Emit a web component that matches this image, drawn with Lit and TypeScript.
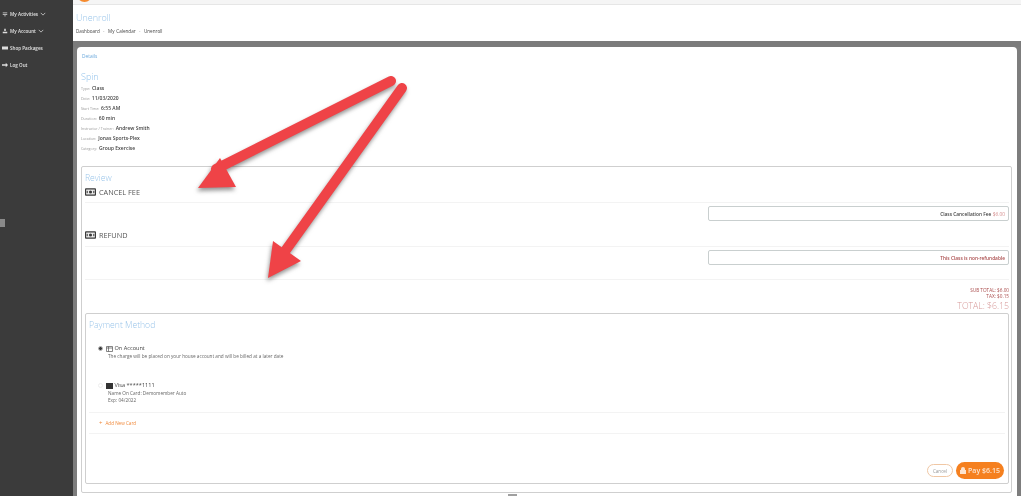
import { LitElement, html, css, svg } from "lit";
import { customElement } from "lit/decorators.js";

const money = svg`<svg class="money" viewBox="0 0 12 8"><rect width="12" height="8" rx="1" fill="#3a3a3a"/><rect x="1.3" y="1.3" width="9.4" height="5.4" fill="#eee"/><circle cx="6" cy="4" r="1.7" fill="#3a3a3a"/><path d="M1.3 4 3 2.4V5.6ZM10.7 4 9 2.4V5.6Z" fill="#3a3a3a"/></svg>`;

@customElement("app-root")
export class AppRoot extends LitElement {
  static styles = css`
    :host { display: block; width: 1024px; height: 496px; overflow: hidden; background: #fff; position: relative; font-family: "Open Sans", "Liberation Sans", sans-serif; color: #333; }
    .page { display: grid; grid-template-columns: 73px 1fr 3px; height: 496px; filter: blur(0.5px); }
    .side { background: #3b3b3b; padding-top: 8px; display: flex; flex-direction: column; gap: 5px; position: relative; }
    .nav { height: 12px; display: flex; align-items: center; gap: 2px; padding-left: 2px; font-size: 4.6px; font-weight: 600; color: #e4e4e4; }
    .nav svg { width: 6px; height: 6px; flex: none; }
    .grip { position: absolute; left: 0; top: 219px; width: 5px; height: 8px; background: #8a8a8a; }
    .main { display: flex; flex-direction: column; min-width: 0; height: 496px; background: #7d7d7d; }
    .top { height: 5px; background: #f5f5f5; border-bottom: 1px solid #e6e6e6; box-sizing: border-box; overflow: hidden; position: relative; }
    .logo { position: absolute; left: 4px; top: -13px; width: 15px; height: 15px; border-radius: 50%; background: #f58a2e; }
    .head { height: 36px; background: #fff; box-sizing: border-box; padding: 6px 0 0 3px; }
    .head h1 { margin: 0; font-size: 9px; line-height: 14px; font-weight: 300; color: #9cc6ea; }
    .crumb { margin-top: 3px; font-size: 4.6px; line-height: 7px; color: #444; word-spacing: 0.6px; }
    .band { height: 6px; background: #7b7b7b; flex: none; }
    .card { flex: 1; margin: 0 4px 0 4px; background: #fff; border-radius: 4px 4px 0 0; padding: 6px 5px 0 4px; box-sizing: border-box; position: relative; min-height: 0; }
    .tab { font-size: 4.8px; line-height: 7px; color: #6aa8dc; padding-left: 1px; }
    .spin { margin: 10px 0 0 0; font-size: 9px; line-height: 13px; font-weight: 300; color: #8fc0ea; }
    .facts { display: flex; flex-direction: column; }
    .fact { height: 10px; display: flex; align-items: center; gap: 2px; font-size: 3.6px; color: #999; }
    .fact b { font-size: 5px; font-weight: 600; color: #444; }
    .review { margin-top: 13px; height: 327px; box-sizing: border-box; border: 1px solid #cfcfcf; border-radius: 2px; padding: 5px 2px 0 3px; }
    .review h2 { margin: 0; font-size: 8.6px; line-height: 13px; font-weight: 300; color: #9cc6ea; }
    .pay h2 { margin: 0; font-size: 8.6px; line-height: 12px; font-weight: 300; color: #9cc6ea; }
    .rowhead { display: flex; align-items: center; gap: 3px; height: 14px; font-size: 7.3px; color: #555; }
    .money { width: 11px; height: 8px; flex: none; }
    hr { border: 0; border-top: 1px solid #f3f3f3; margin: 0; }
    .gap1 { margin-top: 3px; }
    .gap2 { margin-top: 4px; }
    .boxrow { display: flex; justify-content: flex-end; margin-top: 3px; height: 22px; }
    .note { width: 301px; height: 15px; box-sizing: border-box; border: 1px solid #c9cfcf; border-radius: 2px; display: flex; align-items: center; justify-content: flex-end; padding-right: 3px; font-size: 4.8px; font-weight: 600; color: #444; gap: 1.5px; }
    .note span { color: #d58f8f; font-weight: 400; }
    .note.red { color: #a94a4a; }
    .totals { margin-top: 7px; height: 8px; }
    .sums { text-align: right; color: #a94a4a; font-size: 4.7px; line-height: 6px; margin-top: -1px; }
    .total { text-align: right; font-size: 8.7px; line-height: 12px; font-weight: 300; color: #d79a9a; margin-top: 1px; }
    .pay { margin-top: 1px; height: 171px; box-sizing: border-box; border: 1px solid #cfcfcf; border-radius: 2px; padding: 5px 3px 0 3px; display: flex; flex-direction: column; }
    .opt { display: grid; grid-template-columns: 6px 1fr; column-gap: 2px; padding-left: 9px; font-size: 4.7px; line-height: 7px; color: #666; }
    .opt.first { margin-top: 13px; }
    .opt.second { margin-top: 21px; }
    .radio { width: 5px; height: 5px; border-radius: 50%; margin-top: 2px; box-sizing: border-box; border: 1px solid #eee; background: #fff; }
    .radio.on { background: #3a3a3a; border-color: #bbb; }
    .title { display: flex; align-items: center; gap: 1.5px; font-size: 5.6px; line-height: 9px; color: #444; }
    .title svg { width: 7px; height: 6px; flex: none; }
    .sub { padding-left: 2px; }
    .add { margin: 0; padding-left: 10px; height: 20px; display: flex; align-items: center; gap: 3px; font-size: 4.6px; color: #f08a3c; }
    .add i { font-style: normal; font-size: 6px; line-height: 6px; }
    .hr2 { margin-top: 8px; }
    .btns { margin-top: auto; margin-bottom: 4px; padding-right: 1px; display: flex; justify-content: flex-end; gap: 3px; align-items: center; }
    .cancel { width: 26px; height: 13px; box-sizing: border-box; border: 1px solid #f0c7a4; border-radius: 7px; font-size: 4.6px; color: #999; display: flex; align-items: center; justify-content: center; }
    .paybtn { width: 48px; height: 17px; border-radius: 9px; background: #f5801f; color: #fde4cf; font-size: 7px; font-weight: 600; display: flex; align-items: center; justify-content: center; gap: 2px; }
    .paybtn svg { width: 6px; height: 7px; }
    .handle { position: absolute; left: 508px; top: 494px; width: 9px; height: 2px; background: #a0a0a0; }
    .arrows { position: absolute; inset: 0; width: 1024px; height: 496px; pointer-events: none; filter: blur(0.3px) drop-shadow(-1px 3px 2px rgba(60,60,60,.55)); }
  `;

  render() {
    const nav = (label: string, d: string, chev = false) => html`<div class="nav">
      <svg viewBox="0 0 8 8"><path d="${d}" fill="#ddd"/></svg>${label}
      ${chev ? html`<svg viewBox="0 0 8 8"><path d="M1 2.5 4 5.5 7 2.5" fill="none" stroke="#ddd" stroke-width="1"/></svg>` : ""}
    </div>`;
    const facts = [["Type:", "Class"], ["Date:", "11/03/2020"], ["Start Time:", "6:55 AM"], ["Duration:", "60 min"], ["Instructor / Trainer:", "Andrew Smith"], ["Location:", "Jonas Sports-Plex"], ["Category:", "Group Exercise"]];
    return html`
      <div class="page">
        <aside class="side">
          ${nav("My Activities", "M1 2h6v1H1zM1 4h6v1H1zM3 6h2v1H3z", true)}
          ${nav("My Account", "M3 1h2v3H3zM1 5h6v2H1z", true)}
          ${nav("Shop Packages", "M0 2h8v4H0z")}
          ${nav("Log Out", "M0 3h5V1l3 3-3 3V5H0z")}
          <div class="grip"></div>
        </aside>
        <main class="main">
          <div class="top"><div class="logo"></div></div>
          <div class="head">
            <h1>Unenroll</h1>
            <div class="crumb">Dashboard &nbsp;·&nbsp; My Calendar &nbsp;·&nbsp; Unenroll</div>
          </div>
          <div class="band"></div>
          <section class="card">
            <div class="tab">Details</div>
            <div class="spin">Spin</div>
            <div class="facts">${facts.map(([k, v]) => html`<div class="fact">${k} <b>${v}</b></div>`)}</div>
            <div class="review">
              <h2>Review</h2>
              <div class="rowhead">${money}CANCEL FEE</div>
              <hr class="gap1" />
              <div class="boxrow"><div class="note">Class Cancellation Fee <span>$6.00</span></div></div>
              <div class="rowhead">${money}REFUND</div>
              <hr class="gap2" />
              <div class="boxrow"><div class="note red">This Class is non-refundable</div></div>
              <hr class="totals" />
              <div class="sums">SUB TOTAL: $6.00<br />TAX: $0.15</div>
              <div class="total">TOTAL: $6.15</div>
              <div class="pay">
                <h2>Payment Method</h2>
                <div class="opt first">
                  <div class="radio on"></div>
                  <div>
                    <div class="title"><svg viewBox="0 0 7 6"><path d="M.5.5h6v5h-6zM.5 2h6M2.5.5v5" fill="none" stroke="#555" stroke-width=".7"/></svg>On Account</div>
                    <div class="sub">The charge will be placed on your house account and will be billed at a later date</div>
                  </div>
                </div>
                <div class="opt second">
                  <div class="radio"></div>
                  <div>
                    <div class="title"><svg viewBox="0 0 7 6"><rect width="7" height="6" fill="#333"/></svg>Visa *****1111</div>
                    <div class="sub">Name On Card: Demomember Auto<br />Exp: 04/2022</div>
                  </div>
                </div>
                <hr class="hr2" />
                <div class="add"><i>+</i>Add New Card</div>
                <hr />
                <div class="btns">
                  <div class="cancel">Cancel</div>
                  <div class="paybtn"><svg viewBox="0 0 6 7"><path d="M1 3V2a2 2 0 0 1 4 0v1h1v4H0V3z" fill="#fde4cf"/></svg>Pay $6.15</div>
                </div>
              </div>
            </div>
          </section>
        </main>
        <div></div>
      </div>
      <div class="handle"></div>
      <svg class="arrows" viewBox="0 0 1024 496">
        <g fill="#ef4347" stroke="none">
          <path d="M391 81 216 169" stroke="#ef4347" stroke-width="10" stroke-linecap="round" fill="none"/>
          <path d="M198 188 220 158 236 187Z"/>
          <path d="M402 88 283 254" stroke="#ef4347" stroke-width="10" stroke-linecap="round" fill="none"/>
          <path d="M268 278 273 241 301 261Z"/>
        </g>
      </svg>
    `;
  }
}
